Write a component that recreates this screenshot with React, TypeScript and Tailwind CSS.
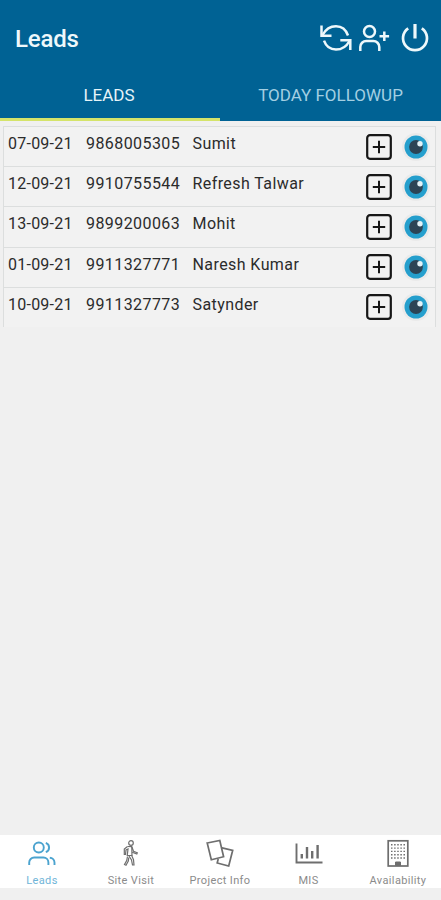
import { useState } from 'react';
import type { ReactNode } from 'react';

interface Lead {
  date: string;
  phone: string;
  name: string;
}

const LEADS: Lead[] = [
  { date: '07-09-21', phone: '9868005305', name: 'Sumit' },
  { date: '12-09-21', phone: '9910755544', name: 'Refresh Talwar' },
  { date: '13-09-21', phone: '9899200063', name: 'Mohit' },
  { date: '01-09-21', phone: '9911327771', name: 'Naresh Kumar' },
  { date: '10-09-21', phone: '9911327773', name: 'Satynder' },
];

function RefreshIcon() {
  return (
    <svg width="32" height="28" viewBox="0 0 32 28" fill="none" stroke="currentColor" strokeWidth="2.5">
      <path d="M1.500 1.500V11.800h10" />
      <path d="M2.500 11C5.500 5.500 10 2.200 16 2.200c5.500 0 10 3.500 12 9.300" />
      <path d="M30.300 26V16.200h-10" />
      <path d="M29.500 17C26.500 22.500 22 25.600 16 25.600c-5.500 0-10-3.300-12-8.900" />
    </svg>
  );
}

function AddUserIcon() {
  return (
    <svg width="32" height="28" viewBox="0 0 32 28" fill="none" stroke="currentColor" strokeWidth="2.5">
      <circle cx="10.500" cy="7.500" r="5.500" />
      <path d="M1.300 27V23a6 6 0 0 1 6-6h7a6 6 0 0 1 6 6v4" />
      <path d="M25.300 7.500v9.600M20.500 12.300h9.600" />
    </svg>
  );
}

function PowerIcon() {
  return (
    <svg width="28" height="28" viewBox="0 0 28 28" fill="none" stroke="currentColor" strokeWidth="2.700">
      <path d="M7.200 4.300a12 12 0 1 0 13.600 0" />
      <path d="M14 0v14.500" strokeWidth="3.200" />
    </svg>
  );
}

function PlusBoxIcon() {
  return (
    <svg width="26" height="26" viewBox="0 0 26 26" fill="none" stroke="#171717">
      <rect x="1.200" y="1.200" width="23.600" height="23.600" rx="2.800" strokeWidth="2.200" />
      <path d="M13 6.800v12.400M6.800 13h12.400" strokeWidth="2" />
    </svg>
  );
}

function EyeIcon() {
  return (
    <svg width="28" height="28" viewBox="0 0 28 28">
      <circle cx="14" cy="14" r="14" fill="#eaeaea" />
      <circle cx="14" cy="14" r="11.500" fill="#259fcd" />
      <circle cx="14" cy="14" r="6.900" fill="#2c4456" />
      <circle cx="18" cy="10.700" r="2.700" fill="#e4f2f7" />
    </svg>
  );
}

function LeadsIcon() {
  return (
    <svg width="28" height="28" viewBox="0 0 28 28" fill="none" stroke="currentColor" strokeWidth="1.900">
      <circle cx="10.800" cy="8.500" r="5" />
      <path d="M1.200 26V23.500a5 5 0 0 1 5-5h9.200a5 5 0 0 1 5 5V26" />
      <path d="M17.800 3.800a5 5 0 0 1 0 9.400M21.800 18.700a5 5 0 0 1 4.700 4.800V26" />
    </svg>
  );
}

function WalkIcon() {
  return (
    <svg width="28" height="28" viewBox="0 0 28 28" fill="none" stroke="currentColor" strokeWidth="1.200">
      <circle cx="14" cy="4" r="2.300" />
      <path d="M10.500 7.500l4.300.2 1.700 4.600 3.800 1.500-.5 1.200-4.600-1.700" />
      <path d="M10.500 7.500L7.300 10v5.500h1.200l.5-4.500 2-1-.8 7M14.800 8l.2 9" />
      <path d="M10.200 16.500h4.500l1.800 4.200.5 5.300h-1.500l-1-5-2.500-4" />
      <path d="M10.500 17.500l-.8 4-2.200 4 1.500.7 2.300-4.200.5-3.500" />
    </svg>
  );
}

function CardsIcon() {
  return (
    <svg width="28" height="28" viewBox="0 0 28 28" fill="none" stroke="currentColor" strokeWidth="1.700">
      <path d="M15 8.700l11.700 2.600-4 15.700-11.500-3 1-4" />
      <path d="M1.200 4L13.800 1.500l3.800 16.200L5.300 20.800z" fill="#fff" />
    </svg>
  );
}

function ChartIcon() {
  return (
    <svg width="28" height="28" viewBox="0 0 28 28" fill="none" stroke="currentColor">
      <path d="M1.500 4.500v19h26" strokeWidth="1.900" />
      <path d="M6.800 15v4.500M12 8v11.500M17.200 12v7.500M22.600 6v13.500" strokeWidth="2.400" />
    </svg>
  );
}

function BuildingIcon() {
  return (
    <svg width="28" height="28" viewBox="0 0 28 28" fill="none" stroke="currentColor">
      <rect x="4.200" y="1.800" width="19.600" height="25.200" strokeWidth="1.700" />
      <path
        d="M7 5.800h14M7 9.100h14M7 12.400h14M7 15.700h14M7 19h14"
        strokeWidth="1.400"
        strokeDasharray="1.500 1.620"
      />
      <path d="M11.500 26.500V23h5v3.500z" fill="currentColor" />
    </svg>
  );
}

const NAV_ITEMS: { label: string; icon: ReactNode }[] = [
  { label: 'Leads', icon: <LeadsIcon /> },
  { label: 'Site Visit', icon: <WalkIcon /> },
  { label: 'Project Info', icon: <CardsIcon /> },
  { label: 'MIS', icon: <ChartIcon /> },
  { label: 'Availability', icon: <BuildingIcon /> },
];

function LeadRow({ lead }: { lead: Lead }) {
  return (
    <div className="flex h-[40.2px] border-t border-[#dcdede] pl-1 text-base leading-[34px] tracking-[0.42px] text-[#2b2b2b]">
      <span className="w-[78px] tracking-[0.24px]">{lead.date}</span>
      <span className="w-[106.5px]">{lead.phone}</span>
      <span className="flex-1">{lead.name}</span>
      <div className="flex items-center gap-[10px] pr-[5px]">
        <button aria-label="Add">
          <PlusBoxIcon />
        </button>
        <button aria-label="View">
          <EyeIcon />
        </button>
      </div>
    </div>
  );
}

export default function App() {
  const [tab, setTab] = useState(0);
  const [active, setActive] = useState('Leads');

  return (
    <div className="flex h-[900px] w-[441px] flex-col overflow-hidden bg-[#f0f0f0] font-['Roboto',sans-serif]">
      <header className="h-[121px] shrink-0 bg-[#006294] text-[#eef8fb]">
        <div className="flex h-[76px] items-center justify-between pr-3 pl-[15px]">
          <h1 className="pt-px text-2xl font-medium tracking-[-0.2px]">Leads</h1>
          <div className="flex items-center">
            <RefreshIcon />
            <span className="ml-[7px]">
              <AddUserIcon />
            </span>
            <span className="ml-[10px]">
              <PowerIcon />
            </span>
          </div>
        </div>
        <div className="grid h-[45px] grid-cols-[220px_221px]">
          {['LEADS', 'TODAY FOLLOWUP'].map((label, i) => (
            <button
              key={label}
              onClick={() => setTab(i)}
              className={`flex justify-center border-b-3 pt-[7px] text-[17px] leading-6 ${
                tab === i ? 'border-[#d5e46a] pr-[2px] text-[#e6f4f8]' : 'border-transparent text-[#a3cfe2]'
              }`}
            >
              {label}
            </button>
          ))}
        </div>
      </header>

      <main className="flex-1 px-[3px] pt-[5px]">
        {tab === 0 && (
          <div className="mr-[2px] border-x border-[#dcdede] bg-[#f2f2f2]">
            {LEADS.map((lead) => (
              <LeadRow key={lead.phone} lead={lead} />
            ))}
          </div>
        )}
      </main>

      <nav className="mb-3 grid h-[53px] shrink-0 grid-cols-[84px_94px_84px_93px_86px] bg-white">
        {NAV_ITEMS.map((item) => (
          <button
            key={item.label}
            onClick={() => setActive(item.label)}
            className={`flex flex-col items-center pt-1 text-[11px] tracking-[0.36px] ${
              active === item.label ? 'text-[#4ba3cf]' : 'text-[#6e6e6e]'
            }`}
          >
            {item.icon}
            <span className="mt-[6px] leading-4 opacity-80">{item.label}</span>
          </button>
        ))}
      </nav>
    </div>
  );
}
